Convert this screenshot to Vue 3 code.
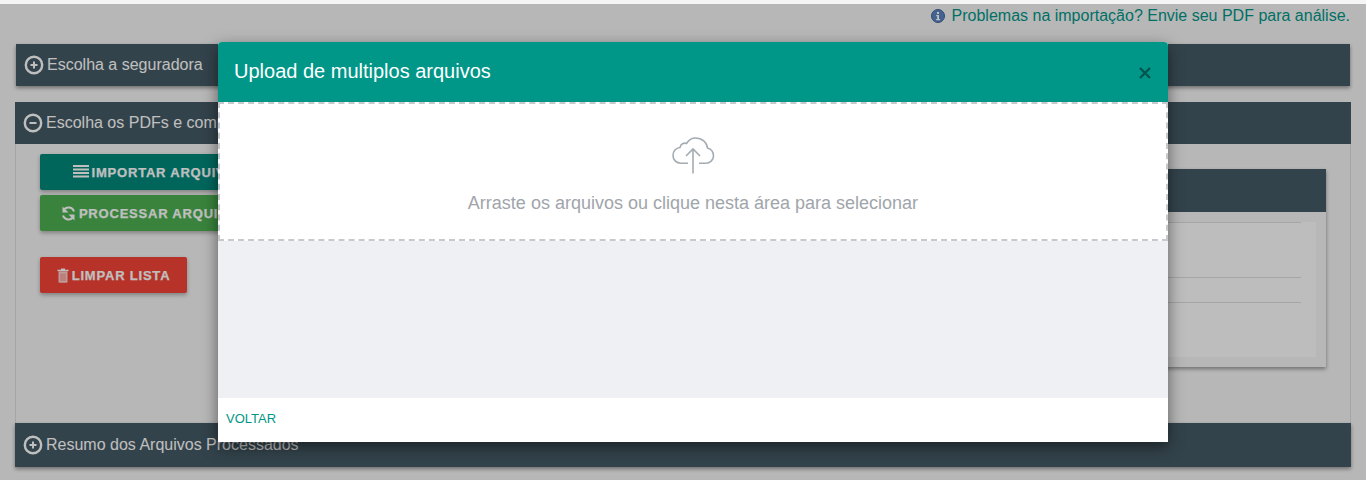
<script setup>
const rows = [
  { label: 'IMPORTAR ARQUIVO', cls: 'teal', icon: 'bars' },
  { label: 'PROCESSAR ARQUIVOS', cls: 'green', icon: 'sync' }
]
</script>

<template>
  <div class="page">
    <p class="notice">
      <svg class="info" viewBox="0 0 14 14" width="14" height="14">
        <circle cx="7" cy="7" r="6.5" fill="#5c84c0" stroke="#3f6399" />
        <rect x="6" y="3" width="2" height="2" fill="#fff" />
        <path d="M5.200 6h2.800v4h1v1.200H5.200V10h1V7.200h-1z" fill="#fff" />
      </svg>
      Problemas na importação? Envie seu PDF para análise.
    </p>

    <section class="bar first">
      <svg class="toggle" viewBox="0 0 20 20" width="20" height="20">
        <circle cx="10" cy="10" r="8.200" fill="none" stroke="#fff" stroke-width="2.400" />
        <path d="M10 6.500v7M6.500 10h7" stroke="#fff" stroke-width="2" />
      </svg>
      <span>Escolha a seguradora</span>
    </section>

    <section class="panel">
      <header class="bar head">
        <svg class="toggle" viewBox="0 0 20 20" width="20" height="20">
          <circle cx="10" cy="10" r="8.200" fill="none" stroke="#fff" stroke-width="2.400" />
          <path d="M6.500 10h7" stroke="#fff" stroke-width="2" />
        </svg>
        <span>Escolha os PDFs e compare</span>
      </header>
      <div class="panel-body">
        <div class="actions">
          <button v-for="r in rows" :key="r.label" class="btn wide" :class="r.cls">
            <svg v-if="r.icon === 'bars'" viewBox="0 0 16 14" width="16" height="14">
              <path d="M0 1h16M0 4.500h16M0 8h16M0 11.500h16" stroke="#fff" stroke-width="2.200" />
            </svg>
            <svg v-else viewBox="0 0 15 15" width="15" height="15">
              <path d="M13 5.500A5.800 5.800 0 0 0 3 3.500M2 9.500a5.800 5.800 0 0 0 10 2" fill="none" stroke="#fff" stroke-width="2" />
              <path d="M1.500 0.500v6h6zM13.500 14.500v-6h-6z" fill="#fff" />
            </svg>
            {{ r.label }}
          </button>
          <button class="btn red clear">
            <svg viewBox="0 0 12 15" width="12" height="15">
              <path d="M0.500 1.800h11v1.400h-11zM4 0.400h4v1.400H4z" fill="#fff" />
              <path d="M1.500 3.500h9v10.200a1 1 0 0 1-1 1h-7a1 1 0 0 1-1-1z" fill="#fff" fill-opacity=".75" />
              <path d="M4 5.500v7.500M6 5.500v7.500M8 5.500v7.500" stroke="#f44336" stroke-opacity=".5" />
            </svg>
            LIMPAR LISTA
          </button>
        </div>
        <div class="card">
          <div class="card-head"></div>
          <div class="card-body">
            <div class="table">
              <div class="row r1"></div>
              <div class="row r2"></div>
              <div class="row r3"></div>
            </div>
          </div>
        </div>
      </div>
      <footer class="bar head">
        <svg class="toggle" viewBox="0 0 20 20" width="20" height="20">
          <circle cx="10" cy="10" r="8.200" fill="none" stroke="#fff" stroke-width="2.400" />
          <path d="M10 6.500v7M6.500 10h7" stroke="#fff" stroke-width="2" />
        </svg>
        <span>Resumo dos Arquivos Processados</span>
      </footer>
    </section>

    <div class="backdrop"></div>

    <div class="modal">
      <header class="modal-head">
        <h2>Upload de multiplos arquivos</h2>
        <svg class="close" viewBox="0 0 14 14" width="14" height="14">
          <path d="M2 2l10 10M12 2L2 12" stroke="#00564e" stroke-width="2.400" />
        </svg>
      </header>
      <div class="drop">
        <svg class="cloud" viewBox="0 0 43 37" width="43" height="37">
          <path d="M16 26.300H9C4 26.300 1 22.500 1 18.500C1 14 4.500 10.500 8 10.500C8.500 7 12 5.500 14.500 6.500C17 2.500 20.500 1 23.500 1C30 1 35 5.500 35.500 11C39 12 41.500 15 41.500 19C41.500 23 38 26.300 34 26.300H27" fill="none" stroke="#a5acb2" stroke-width="1.600" />
          <path d="M21 36.500V12M14 19l7-7 7 7" fill="none" stroke="#a5acb2" stroke-width="1.600" />
        </svg>
        <p>Arraste os arquivos ou clique nesta área para selecionar</p>
      </div>
      <div class="list"></div>
      <footer class="modal-foot">VOLTAR</footer>
    </div>
  </div>
</template>

<style>
html, body { margin: 0; overflow: hidden; }
</style>

<style scoped>
.page {
  position: relative;
  height: 480px;
  overflow: hidden;
  background: #f5f5f5;
  font-family: "Liberation Sans", Arial, sans-serif;
  box-sizing: border-box;
  padding: 8px 15px 0;
}
.notice {
  margin: 0 1px 0 0;
  height: 16px;
  line-height: 16px;
  font-size: 16px;
  color: #009688;
  text-align: right;
  white-space: nowrap;
}
.info { vertical-align: -2px; margin-right: 2px; }
.bar {
  display: flex;
  align-items: center;
  gap: 3px;
  box-sizing: border-box;
  background: #455a64;
  color: #fff;
  font-size: 16px;
  padding-left: 8px;
}
.bar span { white-space: nowrap; }
.first {
  margin: 20px 1px 16px;
  height: 42px;
  box-shadow: 0 2px 4px rgba(0, 0, 0, .4);
}
.panel { display: flex; flex-direction: column; height: 365px; }
.head { height: 42px; flex: none; }
.panel footer.head { height: 44px; box-shadow: 0 2px 4px rgba(0, 0, 0, .4); }
.panel-body {
  flex: 1;
  min-height: 0;
  display: flex;
  justify-content: space-between;
  box-sizing: border-box;
  padding: 10px 24px 0;
  border-left: 1px solid #ddd;
  border-right: 1px solid #ddd;
}
.actions { display: flex; flex-direction: column; align-items: flex-start; gap: 5px; }
.btn {
  display: flex;
  align-items: center;
  justify-content: center;
  gap: 3px;
  height: 36px;
  border: 0;
  border-radius: 2px;
  color: #fff;
  font-family: inherit;
  font-weight: 700;
  font-size: 13px;
  letter-spacing: .8px;
  -webkit-text-stroke: .25px #fff;
  white-space: nowrap;
  padding: 0;
  box-shadow: 0 2px 4px rgba(0, 0, 0, .3);
}
.wide { width: 229px; }
.teal { background: #00897b; }
.green { background: #4caf50; }
.red { background: #f44336; }
.clear { width: 147px; margin-top: 21px; }
.card {
  width: 700px;
  height: 198px;
  margin-top: 15px;
  background: #f5f5f5;
  box-shadow: 0 2px 4px rgba(0, 0, 0, .4);
  display: flex;
  flex-direction: column;
}
.card-head { height: 43px; flex: none; background: #455a64; }
.card-body { flex: 1; margin: 10px; background: #fcfcfc; padding-right: 15px; }
.row { border-top: 1px solid #ddd; }
.r1 { height: 54px; }
.r2 { height: 24px; }
.r3 { height: 1px; }
.backdrop {
  position: absolute;
  inset: 4px 0 0;
  background: rgba(0, 0, 0, .25);
}
.modal {
  position: absolute;
  left: 218px;
  top: 42px;
  width: 950px;
  height: 400px;
  display: flex;
  flex-direction: column;
  background: #fff;
  border-radius: 4px 4px 0 0;
  box-shadow: 0 5px 15px rgba(0, 0, 0, .5);
}
.modal-head {
  height: 60px;
  flex: none;
  display: flex;
  align-items: center;
  justify-content: space-between;
  box-sizing: border-box;
  padding: 0 16px;
  background: #009688;
  border-radius: 4px 4px 0 0;
}
.modal-head h2 {
  margin: -2px 0 0;
  font-size: 20px;
  font-weight: 400;
  color: #fff;
}
.close { margin-top: 2px; }
.drop {
  height: 139px;
  flex: none;
  box-sizing: border-box;
  border: 2px dashed #c8c9cc;
  display: flex;
  flex-direction: column;
  align-items: center;
  padding-top: 33px;
}
.cloud { display: block; }
.drop p {
  margin: 19px 0 0;
  font-size: 18px;
  line-height: 20px;
  color: #a0a5ab;
}
.list { flex: 1; background: #eff0f4; }
.modal-foot {
  height: 44px;
  flex: none;
  box-sizing: border-box;
  padding-left: 8px;
  line-height: 41px;
  font-size: 13px;
  color: #009688;
}
</style>
